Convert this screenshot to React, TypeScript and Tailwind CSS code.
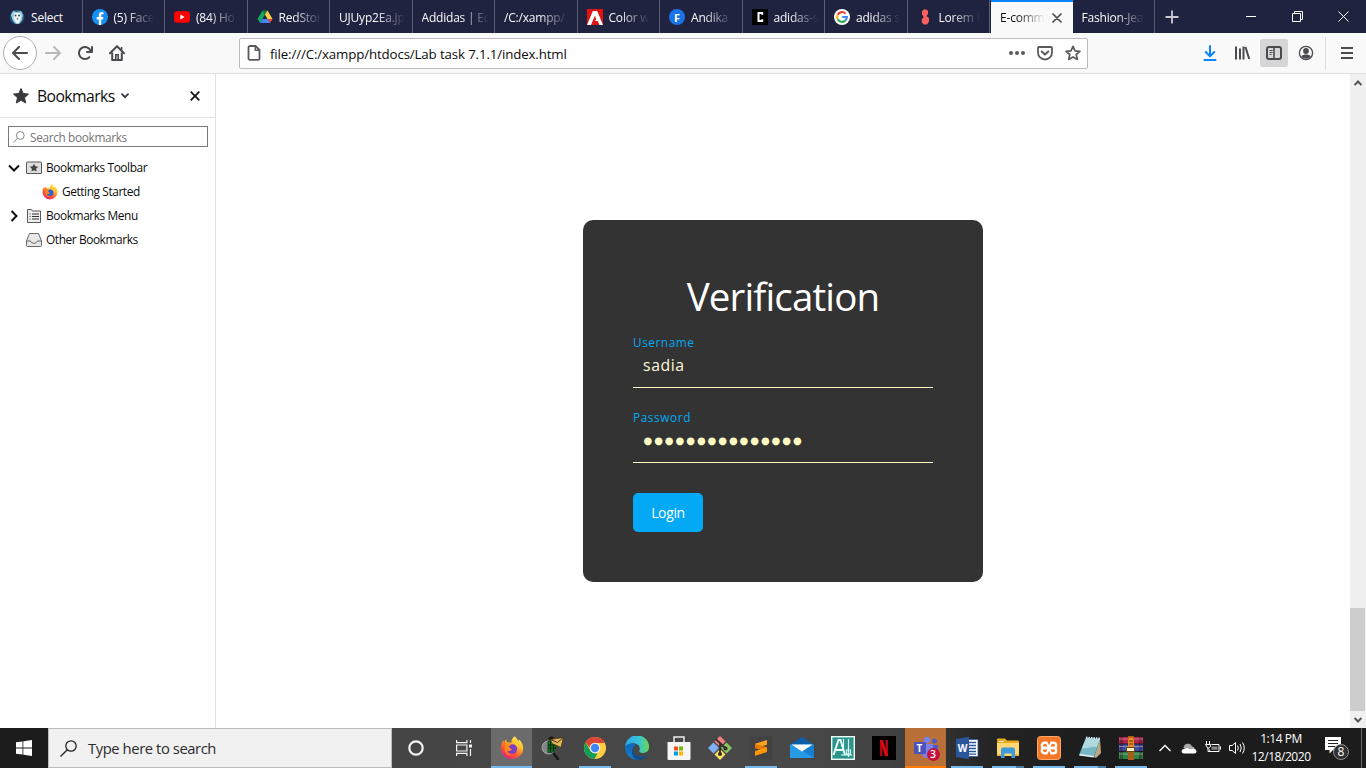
import type { ReactNode } from "react";

const f = "font-['Open_Sans','Noto_Sans',sans-serif]";

/* ---------- Tab strip ---------- */

function PaletteIcon() {
  return (
    <svg width="16" height="16" viewBox="0 0 16 16">
      <circle cx="8" cy="8" r="7.300" fill="#1d5c80" />
      <path d="M2 6l2-4 4 1 4-1 2 4-1 5-3 4H7l-3-3z" fill="#9fcbe0" />
      <path d="M5 4h6l1 5-2 5H7L4.500 9z" fill="#edf5f6" />
      <circle cx="6.500" cy="6.500" r="1" fill="#395668" />
      <circle cx="10" cy="6.500" r="1" fill="#395668" />
      <path d="M7.500 9h2l-1 2z" fill="#556d78" />
    </svg>
  );
}

function FacebookIcon() {
  return (
    <svg width="16" height="16" viewBox="0 0 16 16">
      <circle cx="8" cy="8" r="8" fill="#1690f5" />
      <path d="M6.800 16v-5.600H4.700V8h2.100V6.300c0-2.200 1.200-3.300 3.100-3.300l1.600.15v2h-1c-1 0-1.300.6-1.300 1.250V8h2.200l-.4 2.400H9.200V16z" fill="#fff" />
    </svg>
  );
}

function YoutubeIcon() {
  return (
    <svg width="16" height="16" viewBox="0 0 16 16">
      <rect x="0" y="2.300" width="16" height="11.400" rx="3" fill="#f00" />
      <path d="M6.400 5.600v4.800L10.600 8z" fill="#fff" />
    </svg>
  );
}

function DriveIcon() {
  return (
    <svg width="16" height="16" viewBox="0 0 16 16">
      <path d="M5.500 1.500L8 5.600 3.200 14 .5 10z" fill="#11a861" />
      <path d="M5.500 1.500h5L8 5.600z" fill="#188038" />
      <path d="M10.500 1.500l5 8.500h-5L8 5.600z" fill="#ffcf48" />
      <path d="M5.300 10h10.200l-2.700 4H3.200z" fill="#4285f4" />
      <path d="M15.500 10l-2.700 4-2.300-4z" fill="#ea4335" />
    </svg>
  );
}

function AdobeIcon() {
  return (
    <svg width="16" height="16" viewBox="0 0 16 16">
      <rect width="16" height="16" fill="#e01212" />
      <path d="M0 16L5.800 2h4.400L16 16h-3.600L10.800 12H7.700l1.500-1.200L8 6.500 4 16z" fill="#fff" />
    </svg>
  );
}

function LetterBadge() {
  return (
    <span className="flex h-4 w-4 items-center justify-center rounded-full bg-[#1a73e8] text-[11px] leading-none font-bold text-white">F</span>
  );
}

function BlackCIcon() {
  return (
    <svg width="16" height="16" viewBox="0 0 16 16">
      <rect width="16" height="16" fill="#000" />
      <path d="M10.200 5.800V4H6.500v8h3.700v-1.800" fill="none" stroke="#fff" strokeWidth="2" />
    </svg>
  );
}

function GoogleIcon() {
  return (
    <svg width="16" height="16" viewBox="0 0 16 16">
      <circle cx="8" cy="8" r="8" fill="#fff" />
      <g fill="none" strokeWidth="2.100">
        <path d="M11.600 4.600A4.900 4.900 0 0 0 3.700 5.700" stroke="#ea4335" />
        <path d="M3.700 5.700a4.900 4.900 0 0 0 0 4.600" stroke="#fbbc05" />
        <path d="M3.700 10.300a4.900 4.900 0 0 0 7.600 1.300" stroke="#34a853" />
        <path d="M11.300 11.600A4.900 4.900 0 0 0 12.900 8H8.200" stroke="#4285f4" />
      </g>
    </svg>
  );
}

function FigureIcon() {
  return (
    <svg width="16" height="16" viewBox="0 0 16 16">
      <path d="M6.500 .5h3L11 2v3L9.500 7l2.500 2.200v3.300L10 15.500H7L4.800 13.500v-3.300L6.800 8 5 5.500V2.500z" fill="#ff5f5f" />
    </svg>
  );
}

const tabs: { icon?: ReactNode; label: string; active?: boolean }[] = [
  { icon: <PaletteIcon />, label: "Select" },
  { icon: <FacebookIcon />, label: "(5) Face" },
  { icon: <YoutubeIcon />, label: "(84) Ho" },
  { icon: <DriveIcon />, label: "RedStor" },
  { label: "UJUyp2Ea.jp" },
  { label: "Addidas | Ec" },
  { label: "/C:/xampp/" },
  { icon: <AdobeIcon />, label: "Color w" },
  { icon: <LetterBadge />, label: "Andika" },
  { icon: <BlackCIcon />, label: "adidas-s" },
  { icon: <GoogleIcon />, label: "adidas s" },
  { icon: <FigureIcon />, label: "Lorem I" },
  { label: "E-comm", active: true },
  { label: "Fashion-Jea" },
];

function Tab({ icon, label, active }: { icon?: ReactNode; label: string; active?: boolean }) {
  const fade = label === "Select" ? "" : "[mask-image:linear-gradient(to_right,#000_calc(100%-28px),transparent)]";
  return (
    <div
      className={
        active
          ? "ml-px flex h-[33px] w-[81.500px] shrink-0 items-center border-t-2 border-[#0a84ff] bg-[#f9f9fa] pr-[13px] pl-[9px] text-[#0c0c0d]"
          : "flex h-[33px] w-[82.500px] shrink-0 items-center border-r border-[#5b5d75] bg-[#202340] pt-px pr-[10px] pl-[9px] text-[#f9f9fa]"
      }
    >
      {icon && <span className="mr-[6px] h-4 w-4 shrink-0">{icon}</span>}
      <span className={`flex-1 pt-px text-[12px] leading-[18px] tracking-[-0.200px] whitespace-nowrap ${fade}`}>{label}</span>
      {active && (
        <svg className="ml-[7px] shrink-0" width="10" height="10" viewBox="0 0 10 10">
          <path d="M1 1l8 8M9 1L1 9" stroke="#4a4a4d" strokeWidth="1.700" strokeLinecap="round" />
        </svg>
      )}
    </div>
  );
}

function TabStrip() {
  return (
    <div className="flex h-[33px] items-center bg-[#202340]">
      {tabs.map((t) => (
        <Tab key={t.label} {...t} />
      ))}
      <svg className="ml-[10px]" width="14" height="14" viewBox="0 0 14 14">
        <path d="M7 .5v13M.5 7h13" stroke="#c9c9d2" strokeWidth="1.800" />
      </svg>
      <div className="ml-auto flex items-center pr-[17px]">
        <svg width="10" height="10" viewBox="0 0 10 10"><path d="M0 4.500h10" stroke="#fff" /></svg>
        <svg className="ml-[36px]" width="11" height="11" viewBox="0 0 11 11" fill="none" stroke="#fff"><path d="M.5 2.500h8v8h-8zM2.500 2.500v-2h8v8h-2" /></svg>
        <svg className="ml-[35px]" width="11" height="11" viewBox="0 0 11 11"><path d="M.5.5l10 10M10.500.5l-10 10" stroke="#fff" /></svg>
      </div>
    </div>
  );
}

/* ---------- Navigation bar ---------- */

const arrow =
  "M15 7H3.414l4.293-4.293a1 1 0 0 0-1.414-1.414l-6 6a1 1 0 0 0 0 1.414l6 6a1 1 0 0 0 1.414-1.414L3.414 9H15a1 1 0 0 0 0-2z";

function NavBar() {
  return (
    <div className="flex h-[41px] items-center border-b border-[#dfdfe0] bg-[#f9f9fa] pl-[3px]">
      <div className="flex h-[34px] w-[34px] items-center justify-center rounded-full border border-[#b0b0b3] bg-white">
        <svg width="16" height="16" viewBox="0 0 16 16"><path d={arrow} fill="#4a4a4f" /></svg>
      </div>
      <svg className="ml-2 -scale-x-100" width="16" height="16" viewBox="0 0 16 16"><path d={arrow} fill="#b8b8ba" /></svg>
      <svg className="ml-4" width="16" height="16" viewBox="0 0 16 16">
        <path d="M15 1a1 1 0 0 0-1 1v2.418A6.995 6.995 0 1 0 8 15a6.954 6.954 0 0 0 4.950-2.050 1 1 0 0 0-1.414-1.414A5.019 5.019 0 1 1 12.549 6H10a1 1 0 0 0 0 2h5a1 1 0 0 0 1-1V2a1 1 0 0 0-1-1z" fill="#4a4a4f" />
      </svg>
      <svg className="ml-4" width="16" height="16" viewBox="0 0 16 16" fill="none" stroke="#4a4a4f">
        <path d="M1 8.200L8 1.300l7 6.900" strokeWidth="2" strokeLinecap="round" strokeLinejoin="round" />
        <path d="M3.200 7.500V15h9.600V7.500" strokeWidth="2" strokeLinejoin="round" />
        <path d="M6.800 14.500V9.800h2.400v4.700" strokeWidth="1.600" />
        <path d="M12.600 2v3" strokeWidth="1.600" />
      </svg>
      <div className="ml-[114px] flex h-[31px] w-[849px] items-center rounded-[2px] border border-[#bcbcbe] bg-white pr-[6px] pl-[6px]">
        <svg width="16" height="16" viewBox="0 0 16 16" fill="none" stroke="#5a5a5e" strokeWidth="1.800" strokeLinejoin="round">
          <path d="M3.600 1h5.900l4 4v8.400a1.500 1.500 0 0 1-1.500 1.500H4a1.500 1.500 0 0 1-1.500-1.500V2.500A1.500 1.500 0 0 1 4 1z" />
          <path d="M9.300 1.200v4h4" strokeWidth="1.500" />
        </svg>
        <span className="ml-2 pt-[3px] text-[13.300px] tracking-[-0.140px] whitespace-nowrap text-[#0c0c0d]">file:///C:/xampp/htdocs/Lab task 7.1.1/index.html</span>
        <svg className="ml-auto" width="16" height="16" viewBox="0 0 16 16" fill="#5a5a5e">
          <circle cx="2" cy="8" r="2" /><circle cx="8" cy="8" r="2" /><circle cx="14" cy="8" r="2" />
        </svg>
        <svg className="ml-3" width="16" height="16" viewBox="0 0 16 16" fill="none" stroke="#5a5a5e" strokeLinecap="round" strokeLinejoin="round">
          <path d="M2 2h12a1 1 0 0 1 1 1v4.500a7 7 0 0 1-14 0V3a1 1 0 0 1 1-1z" strokeWidth="1.800" />
          <path d="M4.700 6.500L8 9.600l3.300-3.100" strokeWidth="2" />
        </svg>
        <svg className="ml-3" width="16" height="16" viewBox="0 0 16 16">
          <path d="M8 1.300l2 4.500 4.900.5-3.700 3.200 1.100 4.900L8 11.900l-4.300 2.500 1.100-4.900L1.100 6.300 6 5.800z" fill="none" stroke="#5a5a5e" strokeWidth="1.700" strokeLinejoin="round" />
        </svg>
      </div>
      <svg className="ml-[114px]" width="16" height="16" viewBox="0 0 16 16" fill="none" stroke="#0a84ff" strokeWidth="2" strokeLinecap="round">
        <path d="M8 1v10M3.700 7L8 11.300 12.300 7" strokeLinejoin="round" /><path d="M2.500 15h11" />
      </svg>
      <svg className="ml-4" width="16" height="16" viewBox="0 0 16 16" stroke="#4a4a4f" strokeWidth="2">
        <path d="M2 1.500v13M6 3.500v11M9.500 1.500v13M11.500 2l3.700 12" />
      </svg>
      <div className="ml-[10px] flex h-7 w-7 items-center justify-center rounded-[2px] bg-[#d6d6d6]">
        <svg width="16" height="16" viewBox="0 0 16 16" fill="none" stroke="#4a4a4f">
          <rect x="1" y="2" width="14" height="12" rx="2" strokeWidth="2" />
          <path d="M8 2v12" strokeWidth="1.600" /><path d="M3.500 5.500h3M3.500 7.500h3M3.500 9.500h2" />
        </svg>
      </div>
      <svg className="ml-[10px]" width="16" height="16" viewBox="0 0 16 16">
        <circle cx="8" cy="8" r="6.600" fill="none" stroke="#4a4a4f" strokeWidth="1.300" />
        <circle cx="8" cy="6" r="2.900" fill="#4a4a4f" /><path d="M3.300 11.500c1.300-2.600 8.100-2.600 9.400 0-1.800 3-7.600 3-9.400 0z" fill="#4a4a4f" />
      </svg>
      <div className="ml-[11px] h-[33px] w-px bg-[#dedee0]" />
      <svg className="ml-[15px]" width="12" height="12" viewBox="0 0 12 12"><path d="M0 1h12M0 6h12M0 11h12" stroke="#4a4a4f" strokeWidth="2" /></svg>
    </div>
  );
}

/* ---------- Bookmarks sidebar ---------- */

function FirefoxIcon({ size }: { size: number }) {
  return (
    <svg width={size} height={size} viewBox="0 0 24 24">
      <defs>
        <linearGradient id="fx" x1="0.850" y1="0.050" x2="0.250" y2="1">
          <stop offset="0" stopColor="#fff44f" /><stop offset=".35" stopColor="#ffb52a" />
          <stop offset=".65" stopColor="#ff5a2f" /><stop offset="1" stopColor="#e8197e" />
        </linearGradient>
      </defs>
      <path d="M14.500.3c2 1.500 3.200 3.300 3.600 5l1.200-1.800c2.600 2.700 4 6 4 9.200A11.300 11.300 0 0 1 .8 13C.6 9.300 2 6 3.300 4.200L4 6.200l2.200-3 .9 3.100c2.600-.2 3.400.2 4.400 1C11 4.300 12.500 2 14.500.3z" fill="url(#fx)" />
      <circle cx="12.300" cy="13" r="4.800" fill={size > 20 ? "#7a3fc9" : "#2d62d6"} />
      <path d="M5 8.500c3-2 5.500-1 6.800.6-1.300 0-2 .8-3.100 1.400 1.200.7 1 2.600 3.300 2.800-1.200 2.200-3.700 2.200-5.200.7-.2 3.300 2.900 5.300 6 5.200-5.800 1.600-9.300-3.600-7.800-10.700z" fill="#ff8a16" />
      <path d="M13.300 5.800c3.800 1.200 6.200 4.200 6 8.200-.3-2.600-2-4.700-4.300-5.400z" fill="#ffd43b" />
    </svg>
  );
}

function Sidebar() {
  return (
    <aside className="flex w-[216px] shrink-0 flex-col border-r border-[#e1e1e2] bg-white text-[#0c0c0d]">
      <div className="flex h-[44px] items-center border-b border-[#e1e1e2] pr-[15px] pl-3">
        <svg width="18" height="18" viewBox="0 0 18 18"><path d="M9 1.500l2.200 5 5.300.6-4 3.600 1.200 5.300L9 13.300 4.300 16l1.200-5.300-4-3.600 5.300-.6z" fill="#38383d" stroke="#38383d" strokeLinejoin="round" /></svg>
        <span className="ml-[7px] pt-[2px] text-[15.700px] tracking-[-0.550px]">Bookmarks</span>
        <svg className="ml-[6px]" width="8" height="6" viewBox="0 0 8 6"><path d="M1 1.200l3 3 3-3" fill="none" stroke="#38383d" strokeWidth="1.800" strokeLinecap="round" /></svg>
        <svg className="ml-auto" width="10" height="10" viewBox="0 0 10 10"><path d="M.7.7l8.600 8.600M9.300.7L.7 9.300" stroke="#111" strokeWidth="1.700" /></svg>
      </div>
      <div className="mx-2 mt-2 flex h-[21px] w-[200px] items-center border border-[#7a7a7a] bg-white pl-[4px]">
        <svg width="12" height="12" viewBox="0 0 12 12" fill="none" stroke="#858585"><circle cx="7.300" cy="4.500" r="3.900" /><path d="M4.500 7.300L.5 11.300" /></svg>
        <span className="ml-[5px] pt-px text-[11.800px] leading-[18px] tracking-[-0.330px] text-[#757575]">Search bookmarks</span>
      </div>
      <div className="mt-[9px] flex flex-col text-[11.900px] tracking-[-0.420px]">
        <div className="flex h-6 items-center pl-2">
          <svg width="12" height="12" viewBox="0 0 12 12"><path d="M1 3.500l5 5 5-5" fill="none" stroke="#111" strokeWidth="2" /></svg>
          <svg className="ml-[6px]" width="16" height="14" viewBox="0 0 16 14"><rect x=".5" y="1" width="15" height="11.500" rx=".5" fill="#dedede" stroke="#58585b" /><path d="M8 2.700l1.300 2.600 2.900.4-2.100 2 .5 2.800L8 9.200l-2.600 1.300.5-2.800-2.100-2 2.900-.4z" fill="#444" /></svg>
          <span className="ml-1">Bookmarks Toolbar</span>
        </div>
        <div className="flex h-6 items-center pl-[42px]">
          <FirefoxIcon size={16} /><span className="ml-1">Getting Started</span>
        </div>
        <div className="flex h-6 items-center pl-2">
          <svg width="12" height="12" viewBox="0 0 12 12"><path d="M3.500 1l5 5-5 5" fill="none" stroke="#111" strokeWidth="2" /></svg>
          <svg className="ml-[6px]" width="16" height="14" viewBox="0 0 16 14" fill="none" stroke="#58585b"><path d="M1.500 13V.5h4l1 1.500h8v11.500h-13z" fill="#eee" /><path d="M3.500 5h1M6 5h7M3.500 7.500h1M6 7.500h7M3.500 10h1M6 10h7" stroke="#333" /></svg>
          <span className="ml-1">Bookmarks Menu</span>
        </div>
        <div className="flex h-6 items-center pl-[26px]">
          <svg width="16" height="14" viewBox="0 0 16 14"><path d="M3.500 .5h9l3 7.500v4.500a1 1 0 0 1-1 1h-13a1 1 0 0 1-1-1V8z" fill="#e8e8e8" stroke="#68686b" /><path d="M.5 8h4c.6 3 6.400 3 7 0h4" fill="none" stroke="#68686b" /></svg>
          <span className="ml-1">Other Bookmarks</span>
        </div>
      </div>
    </aside>
  );
}

/* ---------- Page ---------- */

function Page() {
  return (
    <main className="flex flex-1 justify-center bg-white">
      <section className="mt-[146px] flex h-[362px] w-[400px] flex-col rounded-[10px] bg-[#333] px-[50px]">
        <h1 className="mt-[51px] text-center text-[38.500px] leading-[50px] tracking-[-0.850px] text-white">Verification</h1>
        <label className="mt-[13px] text-[11.800px] leading-4 tracking-[0.550px] text-[#03a9f4]">Username</label>
        <div className="flex h-[38px] items-start border-b border-[#fff9c4] pt-[3px] pl-[10px] text-[15.800px] leading-[24px] tracking-[0.600px] text-[#fff9d8]">sadia</div>
        <label className="mt-[21px] text-[11.800px] leading-4 tracking-[0.600px] text-[#03a9f4]">Password</label>
        <div className="flex h-[38px] items-start border-b border-[#fff9c4] pt-[5px] pl-[10.500px] font-['DejaVu_Sans',sans-serif] text-[10px] leading-[22px] tracking-[1.950px] text-[#fff9c4]">●●●●●●●●●●●●●●●</div>
        <button className="mt-[30px] h-[39px] w-[70px] rounded-[5px] bg-[#03a9f4] text-[14px] tracking-[-0.350px] text-white">Login</button>
      </section>
    </main>
  );
}

function Scrollbar() {
  return (
    <div className="flex w-4 shrink-0 flex-col items-center bg-[#f0f0f0]">
      <svg className="mt-[6px]" width="8" height="6" viewBox="0 0 8 6"><path d="M.6 5L4 1.500 7.400 5" fill="none" stroke="#555" strokeWidth="2" /></svg>
      <div className="mt-auto h-[103px] w-[15px] self-start bg-[#cdcdcd]" />
      <svg className="mt-[6px] mb-[5px]" width="8" height="6" viewBox="0 0 8 6"><path d="M.6 1L4 4.500 7.400 1" fill="none" stroke="#555" strokeWidth="2" /></svg>
    </div>
  );
}

/* ---------- Taskbar ---------- */

function NetworkToolIcon() {
  return (
    <svg width="24" height="24" viewBox="0 0 24 24">
      <circle cx="7.500" cy="11.500" r="6.500" fill="#858585" stroke="#a5a5a5" />
      <path d="M7 5.500c5-1 9 1 8 5.500s-4 6-8 5.500z" fill="#0a7d12" stroke="#043" /><path d="M9.500 6v10M12.500 7v8M7 9h8M7 12h8" stroke="#031d06" strokeWidth=".9" />
      <path d="M7 2l4-2 2 2-4 3z" fill="#241a10" />
      <path d="M9.500 3.500L22.500 1.500l-2.500 10-9-4z" fill="#e6b85c" stroke="#49310e" strokeWidth=".8" /><path d="M9.500 3.500l7 3 6-5" fill="none" stroke="#49310e" />
      <path d="M12.500 17l5 7" stroke="#161616" strokeWidth="2.400" />
    </svg>
  );
}

function ChromeIcon() {
  return (
    <svg width="24" height="24" viewBox="0 0 24 24">
      <circle cx="12" cy="12" r="11" fill="#ffcd40" />
      <path d="M2.500 6.500A11 11 0 0 1 21.700 7H12L7 12z" fill="#db4437" />
      <path d="M2.500 6.500L7.500 14.800 12 17.500h2.500L11.500 23A11 11 0 0 1 2.500 6.500z" fill="#0f9d58" />
      <circle cx="12" cy="12" r="5.300" fill="#f5f5f5" /><circle cx="12" cy="12" r="4.200" fill="#4285f4" />
    </svg>
  );
}

function EdgeIcon() {
  return (
    <svg width="24" height="24" viewBox="0 0 24 24">
      <defs>
        <linearGradient id="edgeTop" x1="0" x2="1"><stop offset="0" stopColor="#2aa8e8" /><stop offset=".55" stopColor="#35c1dc" /><stop offset="1" stopColor="#67db50" /></linearGradient>
        <linearGradient id="edgeLow" x1="0" y1="0" x2="0" y2="1"><stop offset="0" stopColor="#0d68b8" /><stop offset="1" stopColor="#1280ce" /></linearGradient>
      </defs>
      <path d="M.2 11A11.900 11.900 0 0 1 24 11.300c0 3.500-2.700 5.700-5.900 5.700-2.400 0-4.300-1-3.800-2.200.9-1.700.7-4.200-1.200-5.800C9.700 6 3 7 .2 11z" fill="url(#edgeTop)" />
      <path d="M.2 11C2 7.500 7.500 6.700 11 8.700c-3.500 2-4 6.600-1.200 9.500 3.500 3.300 8.200 2.500 12.300.2A12 12 0 0 1 .1 12z" fill="url(#edgeLow)" />
      <path d="M11 8.700c-3.500 2-4 6.600-1.200 9.500 3.500 3.300 8.200 2.500 12.300.2-2 3.600-5.500 5.400-8.900 5.600C6 22.500 4.500 12 11 8.700z" fill="#134b87" />
    </svg>
  );
}

function StoreIcon() {
  return (
    <svg width="24" height="24" viewBox="0 0 24 24">
      <path d="M7 7V1h10v6" fill="none" stroke="#f2f2f2" strokeWidth="1.400" /><path d="M.5 6h23v17a1 1 0 0 1-1 1h-21a1 1 0 0 1-1-1z" fill="#f5f5f5" />
      <path d="M7 10.500h4v4H7z" fill="#f04e1f" /><path d="M12 10.500h4v4h-4z" fill="#7db500" /><path d="M7 15.500h4v4H7z" fill="#00a1ec" /><path d="M12 15.500h4v4h-4z" fill="#ffb600" />
    </svg>
  );
}

function GitIcon() {
  return (
    <svg width="24" height="24" viewBox="0 0 24 24">
      <path d="M12 0l5.500 5.500L12 11 6.500 5.500z" fill="#f48080" /><path d="M5.500 6.500L11 12l-5.500 5.500L0 12z" fill="#7eb0f3" />
      <path d="M18.500 6.500L24 12l-5.500 5.500L13 12z" fill="#89c65d" /><path d="M12 13l5.500 5.500L12 24l-5.500-5.500z" fill="#ffe166" />
      <g fill="none" stroke="#352a27" strokeWidth="1.800"><path d="M7.500 3l4.500 4v10M12 7l5 5" /><circle cx="12" cy="18" r="1.200" /><circle cx="17.500" cy="12.500" r="1.200" /></g>
    </svg>
  );
}

function SublimeIcon() {
  return (
    <svg width="24" height="24" viewBox="0 0 24 24">
      <rect x=".5" y=".5" width="23" height="23" rx="1.500" fill="#424242" />
      <path d="M18 4v4.700L6 12.300V7.700z" fill="#ffa11a" /><path d="M6 7.700l12 3.600V16L6 12.300z" fill="#e67b00" /><path d="M18 11.300V16L6 19.800V15z" fill="#ff9800" />
    </svg>
  );
}

function MailIcon() {
  return (
    <svg width="24" height="24" viewBox="0 0 24 24">
      <path d="M0 8.500L12 1l12 7.500V22H0z" fill="#0e5fa8" /><path d="M0 8.500h24V22H0z" fill="#2899e5" /><path d="M12 14.500L24 8.500V22z" fill="#1681d2" /><path d="M1.500 8.500h21L12 15.500z" fill="#fff" />
    </svg>
  );
}

function AutodeskIcon() {
  return (
    <svg width="24" height="24" viewBox="0 0 24 24">
      <rect x=".7" y=".7" width="22.600" height="22.600" fill="#2c9488" stroke="#eafffb" strokeWidth="1.400" />
      <path d="M2.500 19L7.500 4h2L14 19M5 14h8" fill="none" stroke="#e9fffb" strokeWidth="2" /><path d="M12.500 3v12M17.500 3v18M10 19h11M15.500 14h4v4h-4z" fill="none" stroke="#d9fffa" strokeWidth="1.200" />
    </svg>
  );
}

function NetflixIcon() {
  return (
    <svg width="24" height="24" viewBox="0 0 24 24">
      <rect width="24" height="24" fill="#000" /><path d="M8 4h2.500v16L8 20.300zM13.500 4H16v16.300l-2.500-.3z" fill="#b0060f" /><path d="M8 4h2.700L16 20.300l-2.800-.3z" fill="#e50914" />
    </svg>
  );
}

function TeamsIcon() {
  return (
    <div className="relative h-6 w-6">
      <svg width="24" height="24" viewBox="0 0 24 24">
        <circle cx="13" cy="4" r="3.300" fill="#7b83eb" /><circle cx="20.500" cy="5" r="2.500" fill="#5059c9" />
        <path d="M17 9h7v7a5 5 0 0 1-7 2z" fill="#5059c9" /><path d="M8 8h11v9a6 6 0 0 1-11 2z" fill="#7b83eb" /><rect x="0" y="6" width="12" height="12" rx="1" fill="#4b53bc" />
      </svg>
      <span className="absolute top-[6px] left-0 w-3 text-center text-[10px] leading-3 font-bold text-white">T</span>
      <span className="absolute top-[12px] left-[13px] flex h-[13px] w-[13px] items-center justify-center rounded-full bg-[#c4103b] text-[10.500px] leading-none font-semibold text-white">3</span>
    </div>
  );
}

function WordIcon() {
  return (
    <div className="relative h-6 w-6">
      <svg width="24" height="24" viewBox="0 0 24 24"><path d="M12 3.500h11v17H12z" fill="#fff" stroke="#2b579a" strokeWidth=".8" /><path d="M14 6.500h7M14 9.500h7M14 12.500h7M14 15.500h7M14 18.200h7" stroke="#2b579a" strokeWidth="1.300" /><path d="M1 3l13-2.300v22.600L1 21z" fill="#2b579a" /></svg>
      <span className="absolute top-[6px] left-[2px] w-3 text-center text-[10px] leading-3 font-bold text-white">W</span>
    </div>
  );
}

function ExplorerIcon() {
  return (
    <svg width="24" height="24" viewBox="0 0 24 24">
      <path d="M1 3.500a1 1 0 0 1 1-1h7l2 2h11a1 1 0 0 1 1 1V20H1z" fill="#e8a820" /><path d="M3 5h5v1H3z" fill="#fff2bd" /><path d="M1 7h22v13H1z" fill="#ffd873" />
      <path d="M5 13.500a2 2 0 0 1 2-2h10a2 2 0 0 1 2 2V22h-3.500v-4.500h-7V22H5z" fill="#3b9bdc" /><path d="M1 18h4v2H1zM19 18h4v2h-4z" fill="#eeb73c" />
    </svg>
  );
}

function XamppIcon() {
  return (
    <svg width="24" height="24" viewBox="0 0 24 24">
      <rect x=".5" y=".5" width="23" height="23" rx="3" fill="#f37726" stroke="#fba86a" />
      <g fill="none" stroke="#fff" strokeWidth="2.400">
        <path d="M10.500 6.700H7.500a2.400 2.400 0 0 0 0 5.300h9a2.400 2.400 0 0 0 0-5.300h-3" />
        <path d="M10.500 17.300H7.500a2.400 2.400 0 0 1 0-5.300h9a2.400 2.400 0 0 1 0 5.300h-3" />
        <path d="M9.800 6.700L14.200 17.300M14.200 6.700L9.800 17.300" strokeWidth="2" />
      </g>
    </svg>
  );
}

function NotepadIcon() {
  return (
    <svg width="24" height="24" viewBox="0 0 24 24"><path d="M22 3l1 14-5 5-2-1z" fill="#bca982" /><path d="M8 2l14 1-6 18-15-2z" fill="#75b7c4" /><path d="M8 2l14 1-3 8c-6-1-9 2-15 1z" fill="#aed9df" /><path d="M2 18l14 2-.3 1.500L1 19.500z" fill="#e8f3f4" /><path d="M8 1.500l14 1" stroke="#dcecef" strokeDasharray="1.500 1" strokeWidth="1.800" /></svg>
  );
}

function WinrarIcon() {
  return (
    <svg width="24" height="24" viewBox="0 0 24 24">
      <path d="M0 1h24v6.500H0z" fill="#b5234c" /><path d="M0 8.500h24v6.500H0z" fill="#3a50ac" /><path d="M0 16h24v7H0z" fill="#2b8444" />
      <path d="M1 1h3v22H1zM20 1h3v22h-3z" fill="#2c1420" opacity=".4" /><path d="M0 3h24M0 10.500h24M0 18h24" stroke="#e4c8c8" strokeWidth=".7" opacity=".7" />
      <path d="M9 0h6v24H9z" fill="#a75d1c" /><path d="M9 5c0-5 6-5 6 0v10H9z" fill="#e78c25" /><path d="M7.500 11.500h8v4h-8z" fill="#fff0c2" stroke="#674017" /><path d="M10 5h4M10 8h4" stroke="#60340c" />
    </svg>
  );
}

type Running = "none" | "active" | "one" | "many" | "alert";

const apps: { name: string; icon: ReactNode; run: Running; wide?: boolean }[] = [
  { name: "firefox", icon: <FirefoxIcon size={24} />, run: "active" },
  { name: "nettool", icon: <NetworkToolIcon />, run: "none", wide: true },
  { name: "chrome", icon: <ChromeIcon />, run: "one", wide: true },
  { name: "edge", icon: <EdgeIcon />, run: "none", wide: true },
  { name: "store", icon: <StoreIcon />, run: "none" },
  { name: "git", icon: <GitIcon />, run: "none" },
  { name: "sublime", icon: <SublimeIcon />, run: "one" },
  { name: "mail", icon: <MailIcon />, run: "none" },
  { name: "autodesk", icon: <AutodeskIcon />, run: "none" },
  { name: "netflix", icon: <NetflixIcon />, run: "none", wide: true },
  { name: "teams", icon: <TeamsIcon />, run: "alert" },
  { name: "word", icon: <WordIcon />, run: "one" },
  { name: "explorer", icon: <ExplorerIcon />, run: "many" },
  { name: "xampp", icon: <XamppIcon />, run: "one" },
  { name: "notepad", icon: <NotepadIcon />, run: "many" },
  { name: "winrar", icon: <WinrarIcon />, run: "one" },
];

const cellBg: Record<Running, string> = {
  none: "",
  one: "",
  many: "",
  active: "bg-[#6b6b6b]",
  alert: "bg-[#b87038]",
};

function RunBar({ run }: { run: Running }) {
  if (run === "none") return <div className="h-0.5" />;
  if (run === "active") return <div className="h-0.5 w-full bg-[#76b9ed]" />;
  if (run === "alert") return <div className="h-0.5 w-full bg-[#ff7800]" />;
  if (run === "one") return <div className="h-0.5 w-8 bg-[#76b9ed]" />;
  return (
    <div className="flex h-0.5 w-8">
      <div className="w-6 bg-[#76b9ed]" />
      <div className="w-2 bg-[#4d7da5]" />
    </div>
  );
}

function Taskbar() {
  return (
    <footer className="flex h-10 items-center bg-[linear-gradient(to_right,#1c1c1c_0px,#1c1c1c_48px,#454545_392px,#484848_800px,#424242_890px,#242424_990px,#1c1c1c_1100px,#1c1c1c_1366px)] text-white">
      <div className="flex w-12 justify-center">
        <svg width="16" height="16" viewBox="0 0 16 16" fill="#fff"><path d="M0 2.300l6.500-.9v6.100H0zM7.300 1.300L16 0v7.500H7.300zM0 8.400h6.500v6.200L0 13.700zM7.300 8.400H16V16l-8.700-1.300z" /></svg>
      </div>
      <div className="flex h-10 w-[344px] items-center border border-[#bcbcbc] bg-[#f1f1f1] pl-[11px] text-[#2b2b2b]">
        <svg width="17" height="17" viewBox="0 0 17 17" fill="none" stroke="#222" strokeWidth="1.300"><circle cx="11" cy="6" r="5.200" /><path d="M7.300 9.700L.5 16.500" /></svg>
        <span className="ml-[11px] pt-px text-[14.800px] tracking-[-0.430px]">Type here to search</span>
      </div>
      <div className="flex w-12 justify-center">
        <svg width="16" height="16" viewBox="0 0 16 16"><circle cx="8" cy="8" r="6.700" fill="none" stroke="#f4f4f4" strokeWidth="2.200" /></svg>
      </div>
      <div className="flex w-[51px] justify-center pr-[3px]">
        <svg width="16" height="16" viewBox="0 0 16 16" fill="none" stroke="#f4f4f4" strokeWidth="1.200"><path d="M.6 0v2.600h10.300V0M.6 16v-2.600h10.300V16M.6 5h10.300v6H.6zM14.500 0v3M14.500 9v7" /><path d="M13 4.500h3v3h-3z" fill="#f4f4f4" stroke="none" /></svg>
      </div>
      <div className="flex h-10">
        {apps.map((a) => (
          <div key={a.name} className={`flex flex-col items-center ${a.wide ? "w-[42px]" : "w-[41px]"} ${cellBg[a.run]}`}>
            <div className="flex h-[38px] items-center pt-0.5">{a.icon}</div>
            <RunBar run={a.run} />
          </div>
        ))}
      </div>
      <svg className="ml-2" width="12" height="8" viewBox="0 0 12 8"><path d="M.5 7L6 1.500 11.500 7" fill="none" stroke="#fff" strokeWidth="1.300" /></svg>
      <svg className="ml-[10px]" width="16" height="11" viewBox="0 0 16 11"><path d="M2.500 5a4.500 4.500 0 0 1 8.500-1.800A4 4 0 0 1 14 6.500L8 8z" fill="#a9a9a9" /><path d="M3 10.500C-.5 10.500 0 5.500 3.500 6c2-2 4.500-1 5.500.5 3-1.500 6.500-.5 6.500 2a2 2 0 0 1-2 2z" fill="#fff" /></svg>
      <svg className="ml-[8px]" width="16" height="14" viewBox="0 0 16 14" fill="none" stroke="#fff"><path d="M6.500 3.500H14v7H4.500V8.500M15.500 5.500v3" /><path d="M6.500 5.500h6v3.200h-6z" fill="#888" stroke="none" /><path d="M1.500 0v3M4.500 0v3M.5 3.500h5v2L3 7.500zM3 7v3.500h1.500" /></svg>
      <svg className="ml-[8px]" width="17" height="14" viewBox="0 0 17 14" fill="none" stroke="#fff"><path d="M.5 4.500h2.700L6.500 1.500v11l-3.300-3H.5z" /><path d="M8.500 4.500q1.600 2.500 0 5M11 3q2.500 4 0 8M13.500 1.500q3.500 5.500 0 11" /></svg>
      <div className="ml-[4px] flex w-[62px] flex-col items-center pb-px text-[12px] leading-[18px] tracking-[-0.450px] whitespace-nowrap">
        <span>1:14 PM</span>
        <span>12/18/2020</span>
      </div>
      <div className="relative ml-[13px] h-6 w-6">
        <svg width="24" height="24" viewBox="0 0 24 24"><path d="M0 1h16v13H8l-3.500 3.500V14H0z" fill="#fff" /><path d="M3 4.500h10M3 7.500h10M3 10.500h7" stroke="#222" strokeWidth="1.200" /></svg>
        <span className="absolute top-[8px] left-[8px] flex h-4 w-4 items-center justify-center rounded-full border border-[#909090] bg-[#303030] text-[12px] leading-none">8</span>
      </div>
      <div className="mr-1 ml-auto h-10 w-px bg-[#6e6e6e]" />
    </footer>
  );
}

export default function App() {
  return (
    <div className={`flex h-[768px] w-[1366px] flex-col overflow-hidden ${f}`}>
      <TabStrip />
      <NavBar />
      <div className="flex h-[654px]">
        <Sidebar />
        <Page />
        <Scrollbar />
      </div>
      <Taskbar />
    </div>
  );
}
